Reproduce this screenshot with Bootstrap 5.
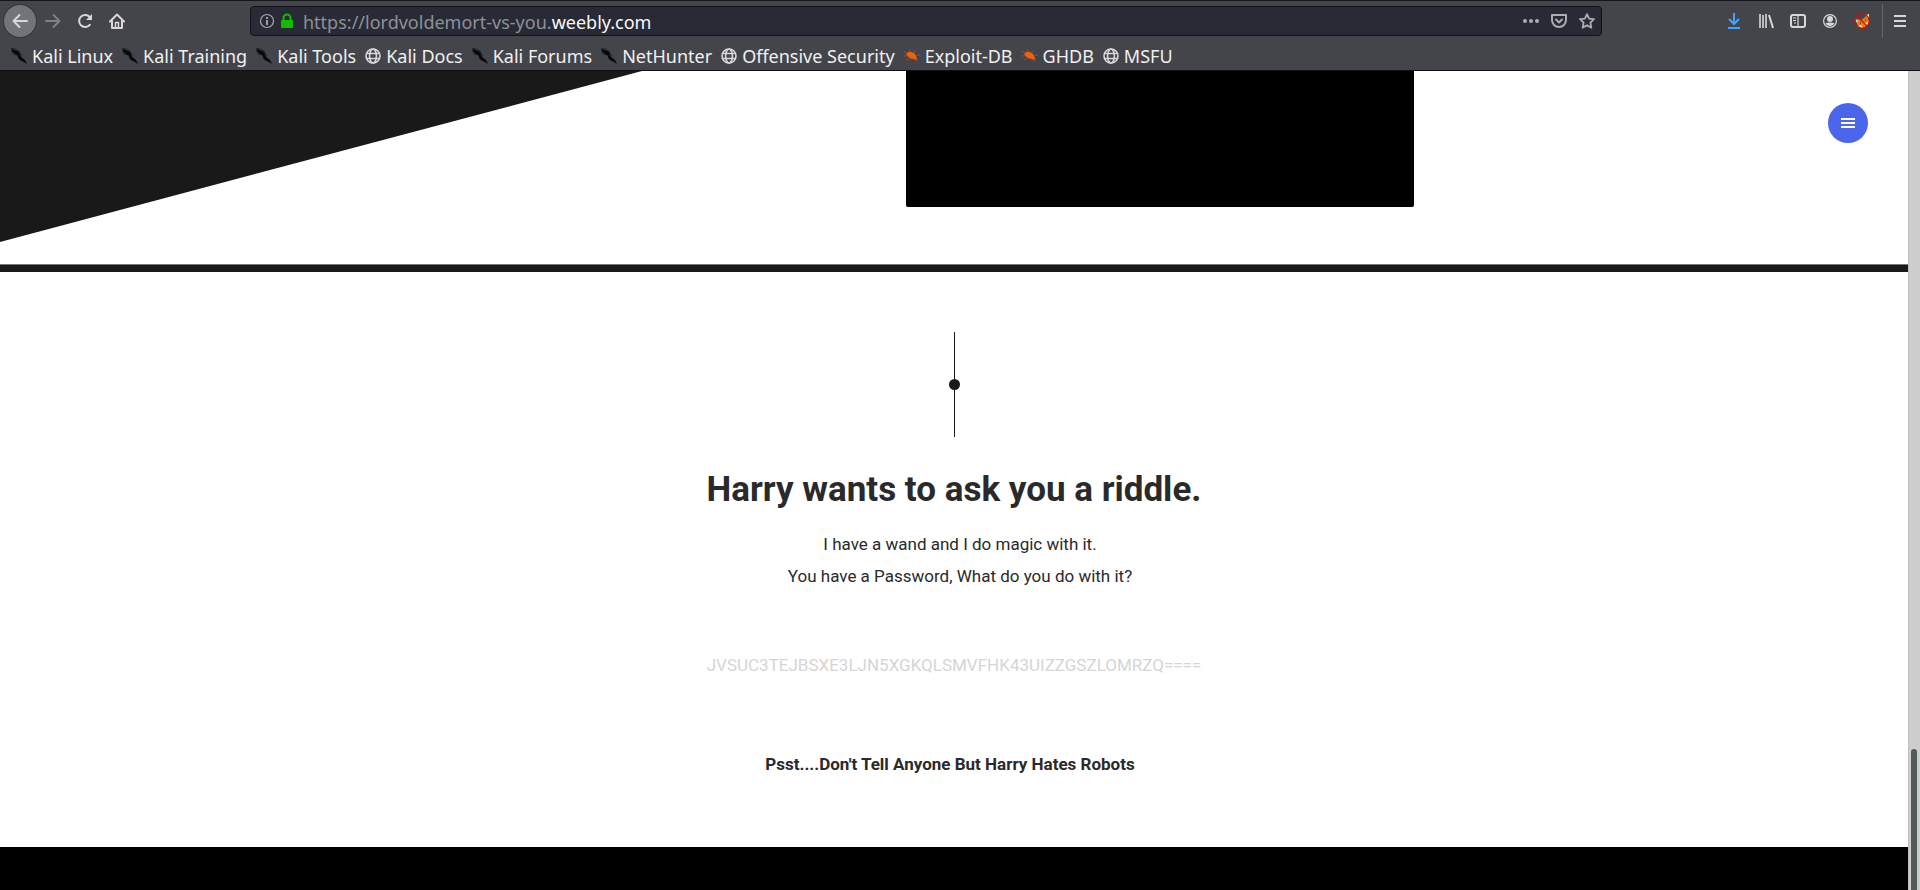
<!DOCTYPE html>
<html lang="en">
<head>
<meta charset="utf-8">
<meta name="viewport" content="width=device-width, initial-scale=1">
<title>Harry wants to ask you a riddle.</title>
<link href="https://cdn.jsdelivr.net/npm/bootstrap@5.3.0/dist/css/bootstrap.min.css" rel="stylesheet">
<style>
body { font-family: Roboto, sans-serif; color: #2a2a2a; background: #fff; }
/* browser chrome */
.chrome { background: #43454b; border-top: 1px solid #14161c; border-bottom: 1px solid #111217; font-family: "Noto Sans", sans-serif; color: #f0f0f0; }
.toolbar { height: 40px; }
.tool { width: 32px; height: 32px; padding: 0; border: 0; background: none; color: #d8d8d8; display: flex; align-items: center; justify-content: center; flex: none; }
.tool-back { background: #737479; border-radius: 50%; box-shadow: 0 0 0 1px #34363b; margin-right: 1px; }
.tool-off { color: #808186; }
.urlbar { height: 30px; margin-left: 117px; width: 1352px; min-width: 0; background: #282a35; border: 1px solid #111217; border-radius: 4px; color: #a9aaae; }
.urlbar .tool { width: 28px; height: 28px; color: #acadb0; }
.address { font-size: 18px; line-height: 26px; padding-top: 2px; color: #8f9197; }
.address b { font-weight: 400; color: #f9f9fa; }
.divider { width: 1px; height: 34px; background: #65676c; margin: 0 1px 0 4px; }
.bookmarks { height: 29px; padding-left: 11px; gap: 9px; }
.bookmarks a { font-size: 18px; line-height: 28px; gap: 5px; color: #f0f0f0; text-decoration: none; white-space: nowrap; }
/* site */
.site { min-width: 0; }
.hero { height: 193px; }
.slant { width: 642px; height: 171px; background: #191919; clip-path: polygon(0 0, 100% 0, 0 100%); }
.video { left: 906px; width: 508px; height: 136px; background: #000; border-radius: 0 0 2px 2px; }
.band { height: 8px; background: #191919; border-top: 1px solid #777; }
.menu-btn { top: 32px; right: 40px; width: 40px; height: 40px; padding: 0; border: 0; border-radius: 50%; background: #4b66ea; color: #fff; }
.riddle { padding-top: 60px; height: 575px; }
.marker { width: 1px; height: 105px; background: #191919; }
.marker i { width: 11px; height: 11px; border-radius: 50%; background: #191919; flex: none; }
h1 { font-size: 35px; line-height: 44px; font-weight: 700; margin: 31px 0 0; }
.verse { font-size: 17px; line-height: 32px; margin: 16px 0 0 12px; }
.cipher { font-size: 17px; line-height: 32px; color: #d5d5d5; margin: 57px 0 0; }
.hint { font-size: 17px; line-height: 32px; font-weight: 700; margin: 67px 8px 0 0; }
.foot { background: #000; }
.scroll-track { width: 12px; background: #cdcdcd; border-left: 1px solid #c3beb9; padding: 0 3px 0 2px; }
.scroll-thumb { width: 6px; height: 141px; background: #555b5b; border-radius: 3px 3px 0 0; }
</style>
</head>
<body class="vh-100 d-flex flex-column overflow-hidden">
<svg class="d-none" xmlns="http://www.w3.org/2000/svg">
  <symbol id="dragon" viewBox="0 0 16 16"><path d="M0 .5l4 1.500 3 1 2 2 .5 3 2 2 2.500 2 2 4-4-2.500-2.500-1-2-2-1-3-3-1.500-2-2z" fill="#08090b"/><path d="M0 0l5 1 4 3M0 3l4 3M1 5l4 2M9 5l2 3" stroke="#1d1f23" stroke-width=".8" fill="none"/></symbol>
  <symbol id="globe" viewBox="0 0 16 16"><g fill="none" stroke="#d8d8d8" stroke-width="1.6"><circle cx="8" cy="8" r="7"/><ellipse cx="8" cy="8" rx="3.4" ry="7"/><path d="M1.5 5.500h13M1.500 10.500h13" stroke-width="1.4"/></g></symbol>
  <symbol id="bug" viewBox="0 0 16 16"><path d="M2 6q2-3 5-2 4 .5 5 4l1.500 4-3.500-1q-5 0-8-5z" fill="#f2600c"/><path d="M0 3l4 3M5 1l2 3M9 4l3-1M12 8l4-1M0 8h3M2 12l4-2M8 10l5 3" stroke="#a5582b" stroke-width=".7"/></symbol>
</svg>

<header class="chrome flex-shrink-0">
  <nav class="toolbar d-flex align-items-center ps-1 pe-1" aria-label="Browser toolbar">
    <button class="tool tool-back" type="button" aria-label="Back"><svg width="16" height="16" viewBox="0 0 16 16" fill="none" stroke="currentColor" stroke-width="2" stroke-linecap="round" stroke-linejoin="round"><path d="M15 8H1.500M7.500 2L1.500 8l6 6"/></svg></button>
    <button class="tool tool-off" type="button" aria-label="Forward"><svg width="16" height="16" viewBox="0 0 16 16" fill="none" stroke="currentColor" stroke-width="2" stroke-linecap="round" stroke-linejoin="round"><path d="M1 8h13.500M8.500 2l6 6-6 6"/></svg></button>
    <button class="tool" type="button" aria-label="Reload"><svg width="16" height="16" viewBox="0 0 16 16" fill="none" stroke="currentColor" stroke-width="2" stroke-linecap="round"><path d="M12.800 11.800a6 6 0 1 1 .4-7"/><path d="M15 1v6H9z" fill="currentColor" stroke="none"/></svg></button>
    <button class="tool" type="button" aria-label="Home"><svg width="16" height="16" viewBox="0 0 16 16" fill="none" stroke="currentColor" stroke-width="2" stroke-linecap="round" stroke-linejoin="round"><path d="M1 8.500l7-7 7 7M3 8v7h10V8"/><path d="M6.500 15V9.500h3V15" stroke-width="1.500"/></svg></button>
    <div class="urlbar d-flex align-items-center ps-2">
      <svg width="16" height="16" viewBox="0 0 16 16" fill="none" stroke="currentColor"><circle cx="8" cy="8" r="6.500" stroke-width="1.200"/><path d="M8 7v5M8 4v2" stroke-width="1.800"/></svg>
      <svg class="ms-1" width="16" height="16" viewBox="0 0 16 16"><path d="M4.500 8V5a3.500 3.500 0 0 1 7 0v3" fill="none" stroke="#12bc00" stroke-width="2"/><rect x="2" y="7" width="12" height="8" rx="1" fill="#12bc00"/></svg>
      <div class="address ms-2 flex-grow-1 text-nowrap">https://lordvoldemort-vs-you.<b>weebly.com</b></div>
      <button class="tool" type="button" aria-label="Page actions"><svg width="16" height="16" viewBox="0 0 16 16" fill="currentColor"><circle cx="2" cy="8" r="2"/><circle cx="8" cy="8" r="2"/><circle cx="14" cy="8" r="2"/></svg></button>
      <button class="tool" type="button" aria-label="Save to Pocket"><svg width="16" height="16" viewBox="0 0 16 16" fill="none" stroke="currentColor" stroke-width="2" stroke-linecap="round" stroke-linejoin="round"><path d="M1 2h14v5a7 7 0 0 1-14 0z"/><path d="M5 6.500l3 3 3-3"/></svg></button>
      <button class="tool" type="button" aria-label="Bookmark this page"><svg width="16" height="16" viewBox="0 0 16 16" fill="none" stroke="currentColor" stroke-width="1.800" stroke-linejoin="round"><path d="M8 1.200l2.100 4.400 4.900.6-3.600 3.400.9 5L8 12.200l-4.300 2.400.9-5L1 6.200l4.900-.6z"/></svg></button>
    </div>
    <div class="d-flex align-items-center ms-auto">
      <button class="tool" type="button" aria-label="Downloads"><svg width="16" height="16" viewBox="0 0 16 16" fill="none" stroke="#45a1ff" stroke-width="2"><path d="M8 0v11M3 6l5 5 5-5M2 15h12"/></svg></button>
      <button class="tool" type="button" aria-label="Library"><svg width="16" height="16" viewBox="0 0 16 16" fill="none" stroke="currentColor" stroke-width="2"><path d="M2 1v14M5 2v13M8 1v14" stroke-width="1.600"/><path d="M11 2l4 13"/></svg></button>
      <button class="tool" type="button" aria-label="Sidebars"><svg width="16" height="16" viewBox="0 0 16 16" fill="none" stroke="currentColor" stroke-width="2"><rect x="1" y="2" width="14" height="12" rx="2"/><path d="M8 2v12M3 5h3M3 7.500h3M4 10h2" stroke-width="1.200"/></svg></button>
      <button class="tool" type="button" aria-label="Account"><svg width="16" height="16" viewBox="0 0 16 16"><circle cx="8" cy="8" r="6.400" fill="none" stroke="currentColor" stroke-width="1.200"/><circle cx="8" cy="6" r="3" fill="currentColor"/><path d="M3.500 10Q8 9 12.500 10 11 13 8 13T3.500 10z" fill="currentColor"/></svg></button>
      <button class="tool" type="button" aria-label="Proxy disabled"><svg width="16" height="16" viewBox="0 0 16 16"><path d="M2 8l2-2 3 1 3-2 3-3 2 2v5l-2 4-5 2-4-2z" fill="#e77c0b"/><path d="M1 5l3 3-1 2zM12 2l3-1v4zM4 13l3-1 2 3zM11 10l4-1-3 4z" fill="#eee5d5"/><path d="M6 10h1M11 7h1" stroke="#222"/><circle cx="8" cy="8" r="7.300" fill="none" stroke="#c01515" stroke-width="1.200"/><path d="M3 3l10 10" stroke="#c01515" stroke-width="1.300"/></svg></button>
      <span class="divider"></span>
      <button class="tool" type="button" aria-label="Open menu"><svg width="16" height="16" viewBox="0 0 16 16" stroke="currentColor" stroke-width="2"><path d="M2 3h12M2 8h12M2 13h12"/></svg></button>
    </div>
  </nav>
  <nav class="bookmarks d-flex align-items-center" aria-label="Bookmarks">
    <a class="d-flex align-items-center" href="#"><svg width="16" height="16"><use href="#dragon"/></svg>Kali Linux</a>
    <a class="d-flex align-items-center" href="#"><svg width="16" height="16"><use href="#dragon"/></svg>Kali Training</a>
    <a class="d-flex align-items-center" href="#"><svg width="16" height="16"><use href="#dragon"/></svg>Kali Tools</a>
    <a class="d-flex align-items-center" href="#"><svg width="16" height="16"><use href="#globe"/></svg>Kali Docs</a>
    <a class="d-flex align-items-center" href="#"><svg width="16" height="16"><use href="#dragon"/></svg>Kali Forums</a>
    <a class="d-flex align-items-center" href="#"><svg width="16" height="16"><use href="#dragon"/></svg>NetHunter</a>
    <a class="d-flex align-items-center" href="#"><svg width="16" height="16"><use href="#globe"/></svg>Offensive Security</a>
    <a class="d-flex align-items-center" href="#"><svg width="16" height="16"><use href="#bug"/></svg>Exploit-DB</a>
    <a class="d-flex align-items-center" href="#"><svg width="16" height="16"><use href="#bug"/></svg>GHDB</a>
    <a class="d-flex align-items-center" href="#"><svg width="16" height="16"><use href="#globe"/></svg>MSFU</a>
  </nav>
</header>

<div class="d-flex flex-grow-1 overflow-hidden">
  <main class="site flex-grow-1 d-flex flex-column position-relative">
    <section class="hero position-relative flex-shrink-0">
      <div class="slant"></div>
      <div class="video position-absolute top-0"></div>
    </section>
    <div class="band flex-shrink-0"></div>
    <section class="riddle d-flex flex-column align-items-center text-center flex-shrink-0">
      <div class="marker d-flex align-items-center justify-content-center"><i></i></div>
      <h1>Harry wants to ask you a riddle.</h1>
      <p class="verse">I have a wand and I do magic with it.<br>You have a Password, What do you do with it?</p>
      <p class="cipher">JVSUC3TEJBSXE3LJN5XGKQLSMVFHK43UIZZGSZLOMRZQ====</p>
      <p class="hint">Psst....Don't Tell Anyone But Harry Hates Robots</p>
    </section>
    <footer class="foot flex-grow-1"></footer>
    <button class="menu-btn position-absolute d-flex align-items-center justify-content-center" type="button" aria-label="Menu"><svg width="14" height="10" viewBox="0 0 14 10" stroke="currentColor" stroke-width="2"><path d="M0 1h14M0 5h14M0 9h14"/></svg></button>
  </main>
  <div class="scroll-track d-flex align-items-end flex-shrink-0"><div class="scroll-thumb"></div></div>
</div>
<script src="https://cdn.jsdelivr.net/npm/bootstrap@5.3.0/dist/js/bootstrap.bundle.min.js"></script>
</body>
</html>
